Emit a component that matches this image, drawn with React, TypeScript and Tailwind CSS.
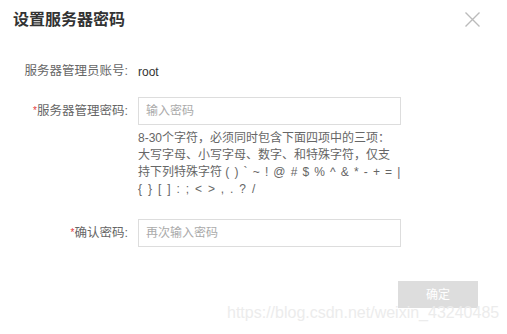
import React from 'react';

const FONT = "font-['Liberation_Sans','Noto_Sans_CJK_SC',sans-serif]";

function Field({
  label,
  required,
  children,
}: {
  label: string;
  required?: boolean;
  children: React.ReactNode;
}) {
  return (
    <div className="flex items-center">
      <div className="w-[128px] text-right text-[12.5px] leading-[20px] text-[#666]">
        {required && <span className="text-[#e4393c] text-[10px] align-top">*</span>}
        {label}:
      </div>
      <div className="ml-[10px]">{children}</div>
    </div>
  );
}

export default function App() {
  return (
    <div className={`relative w-[507px] h-[334px] bg-white overflow-hidden ${FONT}`}>
      {/* Header */}
      <div className="flex items-center justify-between h-[40px] pl-[13px] pr-[27px]">
        <h1 className="text-[16px] leading-[20px] font-bold text-[#333]">设置服务器密码</h1>
        <svg width="15" height="15" viewBox="0 0 15 15" className="mt-[-1px]">
          <path d="M0.5 0.5 L14.5 14.5 M14.5 0.5 L0.5 14.5" stroke="#bbb" strokeWidth="1.4" fill="none" />
        </svg>
      </div>

      {/* Form */}
      <div className="mt-[19px]">
        <Field label="服务器管理员账号">
          <span className="text-[12px] leading-[20px] text-[#333]">root</span>
        </Field>

        <div className="mt-[14px]">
          <Field label="服务器管理密码" required>
            <input
              type="password"
              placeholder="输入密码"
              className="w-[263px] h-[28px] border border-[#ddd] px-[7px] text-[12px] text-[#333] placeholder:text-[#aaa] outline-none"
            />
          </Field>
        </div>

        <div className="ml-[138px] mt-[5px] text-[12px] leading-[17px] text-[#666] whitespace-nowrap">
          8-30个字符，必须同时包含下面四项中的三项：
          <br />
          大写字母、小写字母、数字、和特殊字符，仅支
          <br />
          持下列特殊字符 <span className="tracking-[0.9px]">( ) ` ~ ! @ # $ % ^ &amp; * - + = |</span>
          <br />
          <span className="tracking-[1.3px]">{'{ } [ ] : ; < > , . ? /'}</span>
        </div>

        <div className="mt-[21px]">
          <Field label="确认密码" required>
            <input
              type="password"
              placeholder="再次输入密码"
              className="w-[263px] h-[28px] border border-[#ddd] px-[7px] text-[12px] text-[#333] placeholder:text-[#aaa] outline-none"
            />
          </Field>
        </div>

        <div className="flex justify-end pr-[29px] mt-[34px]">
          <button className="w-[80px] h-[27px] bg-[#ddd] text-white text-[12px]">确定</button>
        </div>
      </div>

      {/* Watermark */}
      <div className="absolute top-[304px] left-[227px] text-[16px] leading-[18px] text-[#ececec] whitespace-nowrap pointer-events-none">
        https://blog.csdn.net/weixin_43240485
      </div>
    </div>
  );
}
